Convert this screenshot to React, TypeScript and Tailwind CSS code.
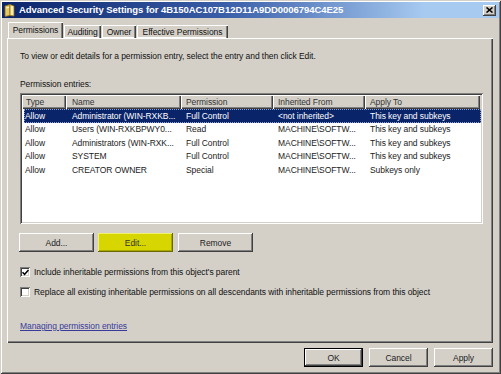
import React from "react";

const rows = [
  ["Allow", "Administrator (WIN-RXKB...", "Full Control", "<not inherited>", "This key and subkeys"],
  ["Allow", "Users (WIN-RXKBPWY0...", "Read", "MACHINE\\SOFTW...", "This key and subkeys"],
  ["Allow", "Administrators (WIN-RXK...", "Full Control", "MACHINE\\SOFTW...", "This key and subkeys"],
  ["Allow", "SYSTEM", "Full Control", "MACHINE\\SOFTW...", "This key and subkeys"],
  ["Allow", "CREATOR OWNER", "Special", "MACHINE\\SOFTW...", "Subkeys only"],
];

const cols = [
  { label: "Type", w: "w-[44px]", pad: "pl-[4px]" },
  { label: "Name", w: "w-[115px]", pad: "pl-[6px]" },
  { label: "Permission", w: "w-[92px]", pad: "pl-[5px]" },
  { label: "Inherited From", w: "w-[92px]", pad: "pl-[5px]" },
  { label: "Apply To", w: "w-[115px]", pad: "pl-[5px]" },
];

function Btn({ children, className = "" }: { children: React.ReactNode; className?: string }) {
  return (
    <div
      className={
        "flex items-center justify-center h-[19px] text-[#222] shadow-[inset_-1px_-1px_0_#404040,inset_1px_1px_0_#ffffff,inset_-2px_-2px_0_#808080] " +
        className
      }
    >
      {children}
    </div>
  );
}

function Check({ checked }: { checked?: boolean }) {
  return (
    <div className="w-[10px] h-[10px] bg-white shadow-[inset_1px_1px_0_#808080,inset_-1px_-1px_0_#ffffff,inset_2px_2px_0_#404040,inset_-2px_-2px_0_#d4d0c8] flex items-center justify-center">
      {checked && (
        <svg width="7" height="7" viewBox="0 0 7 7">
          <path d="M0.5 3.2 L2.6 5.3 L6.5 1" stroke="#000" strokeWidth="1.5" fill="none" />
        </svg>
      )}
    </div>
  );
}

export default function App() {
  return (
    <div className="w-[501px] h-[374px] bg-[#d4d0c8] p-[2px] flex flex-col font-['Liberation_Sans',Arial,sans-serif] text-[8.5px] tracking-[-0.06px] leading-[12px] text-[#111] shadow-[inset_1px_1px_0_#d4d0c8,inset_-1px_-1px_0_#404040,inset_2px_2px_0_#ffffff,inset_-2px_-2px_0_#808080] overflow-hidden">
      {/* Title bar */}
      <div className="h-[16px] flex items-center bg-[linear-gradient(to_right,#0a246a_0%,#3a5ea8_45%,#a6caf0_85%,#a6caf0_100%)] pl-[2px] pr-[3px]">
        <svg width="11" height="13" viewBox="0 0 11 13" className="shrink-0">
          <path d="M1 2 L6 0.5 L6 11.5 L1 12.5 Z" fill="#e8c860" stroke="#8a6a10" strokeWidth="0.8" />
          <path d="M6 0.5 L10 2 L10 12 L6 11.5 Z" fill="#f8ecb0" stroke="#8a6a10" strokeWidth="0.8" />
          <path d="M2 4 L5 3.3" stroke="#fff" strokeWidth="0.8" />
        </svg>
        <span className="ml-[4px] text-white font-bold text-[9.5px] tracking-[-0.05px] leading-[14px] whitespace-nowrap">
          Advanced Security Settings for 4B150AC107B12D11A9DD0006794C4E25
        </span>
        <div className="ml-auto w-[13px] h-[11px] bg-[#d4d0c8] shadow-[inset_-1px_-1px_0_#404040,inset_1px_1px_0_#ffffff,inset_-2px_-2px_0_#808080] flex items-center justify-center">
          <svg width="7" height="6" viewBox="0 0 7 6">
            <path d="M0.5 0.5 L6.5 5.5 M6.5 0.5 L0.5 5.5" stroke="#000" strokeWidth="1.6" />
          </svg>
        </div>
      </div>

      {/* Tabs */}
      <div className="mt-[4px] ml-[6px] h-[16px] flex items-end relative z-10">
        <div className="h-[16px] w-[55px] bg-[#d4d0c8] flex items-center justify-center shadow-[inset_1px_1px_0_#ffffff,inset_-1px_0_0_#404040,inset_-2px_0_0_#808080] pb-[1px]">
          Permissions
        </div>
        <div className="ml-[1px] h-[13px] w-[37px] flex items-center justify-center shadow-[inset_1px_1px_0_#ffffff,inset_-1px_0_0_#404040,inset_-2px_0_0_#808080,inset_0_-1px_0_#ffffff]">
          Auditing
        </div>
        <div className="ml-[1px] h-[13px] w-[34px] flex items-center justify-center shadow-[inset_1px_1px_0_#ffffff,inset_-1px_0_0_#404040,inset_-2px_0_0_#808080,inset_0_-1px_0_#ffffff]">
          Owner
        </div>
        <div className="ml-[1px] h-[13px] w-[91px] flex items-center justify-center shadow-[inset_1px_1px_0_#ffffff,inset_-1px_0_0_#404040,inset_-2px_0_0_#808080,inset_0_-1px_0_#ffffff]">
          Effective Permissions
        </div>
      </div>

      {/* Panel */}
      <div className="ml-[5px] w-[486px] h-[305px] pl-[13px] pt-[12px] flex flex-col shadow-[inset_1px_1px_0_#ffffff,inset_-1px_-1px_0_#404040,inset_-2px_-2px_0_#808080]">
        <div className="h-[12px] whitespace-nowrap">
          To view or edit details for a permission entry, select the entry and then click Edit.
        </div>
        <div className="mt-[16px] h-[12px]">Permission entries:</div>

        {/* List */}
        <div className="mt-[3px] w-[463px] h-[131px] bg-white p-[2px] shadow-[inset_1px_1px_0_#808080,inset_-1px_-1px_0_#ffffff,inset_2px_2px_0_#404040,inset_-2px_-2px_0_#d4d0c8]">
          <div className="flex h-[14px] bg-[#d4d0c8]">
            {cols.map((c) => (
              <div
                key={c.label}
                className={
                  c.w +
                  " " +
                  c.pad +
                  " h-[14px] flex items-center text-[#333] whitespace-nowrap shadow-[inset_1px_1px_0_#ffffff,inset_-1px_-1px_0_#404040,inset_-2px_-2px_0_#808080]"
                }
              >
                {c.label}
              </div>
            ))}
          </div>
          <div className="ml-[2px]">
            {rows.map((r, i) => (
              <div
                key={i}
                className={
                  "flex h-[13.5px] items-center whitespace-nowrap " +
                  (i === 0 ? "bg-[#0a246a] text-white outline-1 outline-dotted outline-[#8fa0d0] -outline-offset-1" : "text-[#222]")
                }
              >
                <div className="w-[42px] pl-[1px]">{r[0]}</div>
                <div className="w-[115px] pl-[6px]">{r[1]}</div>
                <div className="w-[92px] pl-[5px]">{r[2]}</div>
                <div className="w-[92px] pl-[5px]">{r[3]}</div>
                <div className="w-[115px] pl-[5px]">{r[4]}</div>
              </div>
            ))}
          </div>
        </div>

        {/* Buttons */}
        <div className="mt-[9px] flex">
          <Btn className="w-[75px] ml-[-1px]">Add...</Btn>
          <div className="ml-[4px] w-[75px] h-[19px] flex items-center justify-center bg-[#d8d600] text-[#333] shadow-[inset_-1px_-1px_0_#6a6a00,inset_1px_1px_0_#f0f070,inset_-2px_-2px_0_#a8a800]">
            Edit...
          </div>
          <Btn className="ml-[5px] w-[75px]">Remove</Btn>
        </div>

        <div className="mt-[14px] h-[12px] flex items-center">
          <Check checked />
          <span className="ml-[4px] whitespace-nowrap">Include inheritable permissions from this object's parent</span>
        </div>
        <div className="mt-[8px] h-[12px] flex items-center">
          <Check />
          <span className="ml-[4px] whitespace-nowrap">
            Replace all existing inheritable permissions on all descendants with inheritable permissions from this object
          </span>
        </div>

        <div className="mt-[22px] h-[12px]">
          <span className="text-[#3a3a9a] underline">Managing permission entries</span>
        </div>
      </div>

      {/* Bottom buttons */}
      <div className="mt-[5px] flex justify-end pr-[6px]">
        <Btn className="w-[59px] shadow-[inset_0_0_0_1px_#000,inset_-2px_-2px_0_#404040,inset_2px_2px_0_#ffffff,inset_-3px_-3px_0_#808080]">OK</Btn>
        <Btn className="ml-[6px] w-[59px]">Cancel</Btn>
        <Btn className="ml-[6px] w-[59px]">Apply</Btn>
      </div>
    </div>
  );
}
